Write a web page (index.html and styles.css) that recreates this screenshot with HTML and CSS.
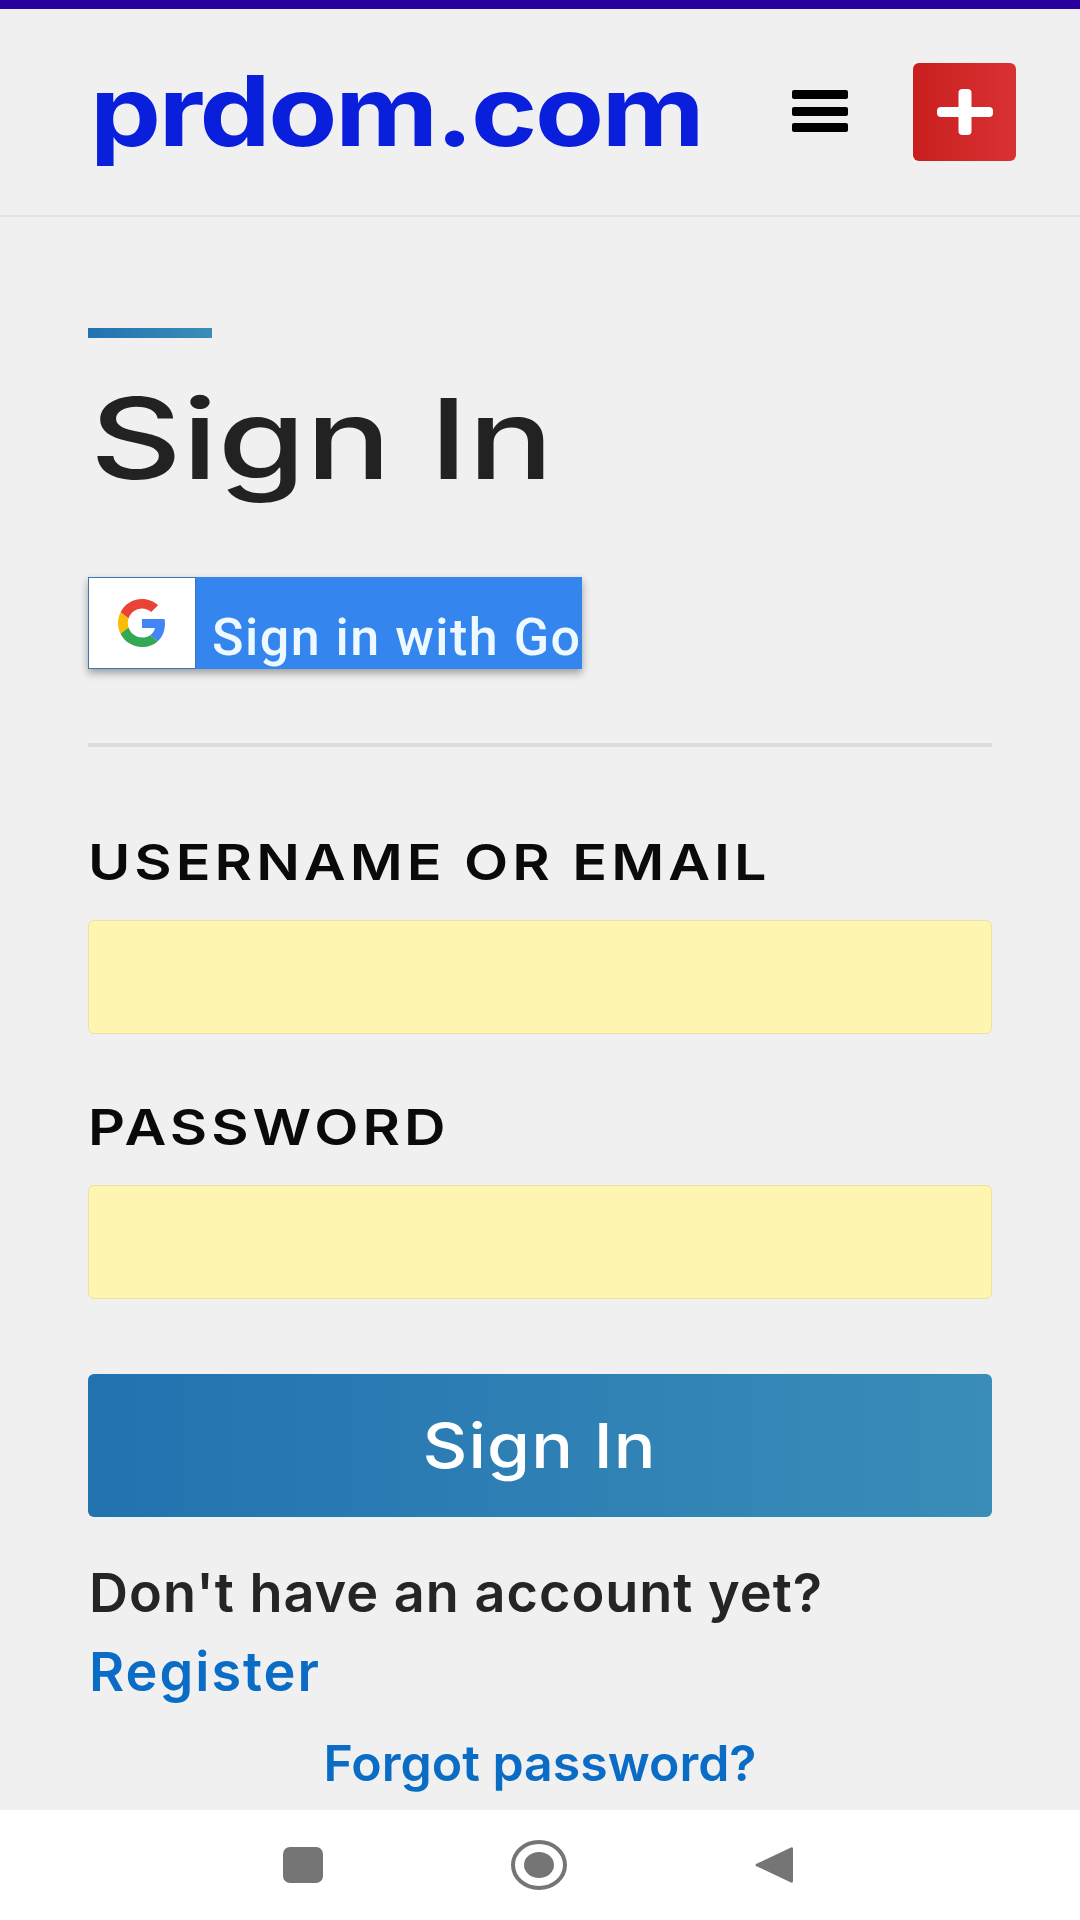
FILE: index.html
```html
<!DOCTYPE html>
<html lang="en">
<head>
    <meta charset="UTF-8">
    <meta name="viewport" content="width=device-width, initial-scale=1.0">
    <title>Sign In - prdom.com</title>
    <link rel="stylesheet" href="styles.css">
</head>
<body>

    <div class="status-bar"></div>

    <!-- Header -->
    <header class="site-header">
        <a class="logo" href="#">prdom.com</a>
        <button class="menu-btn" type="button" aria-label="Menu">
            <span></span><span></span><span></span>
        </button>
        <button class="add-btn" type="button" aria-label="Add">
            <svg width="56" height="46" viewBox="0 0 56 46">
                <rect x="21.500" y="0" width="13" height="46" rx="4" fill="#fff"/>
                <rect x="0" y="18" width="56" height="10" rx="4" fill="#fff"/>
            </svg>
        </button>
    </header>

    <!-- Sign in form -->
    <main class="content">
        <div class="accent"></div>
        <h1>Sign In</h1>

        <a class="google-btn" href="#">
            <span class="google-icon">
                <svg width="52" height="48" viewBox="0 0 48 48">
                    <path fill="#EA4335" d="M24 9.500c3.540 0 6.710 1.220 9.210 3.600l6.850-6.850C35.900 2.380 30.470 0 24 0 14.620 0 6.510 5.380 2.560 13.220l7.980 6.190C12.430 13.720 17.740 9.500 24 9.500z"/>
                    <path fill="#4285F4" d="M46.980 24.550c0-1.570-.15-3.090-.38-4.550H24v9.020h12.940c-.58 2.960-2.260 5.480-4.780 7.180l7.730 6c4.510-4.180 7.090-10.360 7.090-17.650z"/>
                    <path fill="#FBBC05" d="M10.530 28.590c-.48-1.450-.76-2.990-.76-4.590s.27-3.140.76-4.590l-7.980-6.190C.92 16.460 0 20.120 0 24c0 3.880.92 7.540 2.560 10.780l7.970-6.190z"/>
                    <path fill="#34A853" d="M24 48c6.480 0 11.930-2.130 15.890-5.810l-7.730-6c-2.150 1.450-4.920 2.300-8.160 2.300-6.260 0-11.570-4.220-13.470-9.910l-7.980 6.190C6.510 42.620 14.620 48 24 48z"/>
                </svg>
            </span>
            <span class="google-text">Sign in with Google</span>
        </a>

        <hr class="divider">

        <form class="login-form">
            <label for="username">Username or Email</label>
            <input type="text" id="username" name="username">

            <label for="password">Password</label>
            <input type="password" id="password" name="password">

            <button class="submit-btn" type="button"><span>Sign In</span></button>
        </form>

        <p class="register-note">Don't have an account yet?</p>
        <a class="register-link" href="#">Register</a>
        <a class="forgot-link" href="#">Forgot password?</a>
    </main>

    <!-- Navigation keys -->
    <nav class="nav-keys">
        <svg width="40" height="36" viewBox="0 0 40 36"><rect width="40" height="36" rx="7" fill="#757575"/></svg>
        <svg width="56" height="50" viewBox="0 0 56 50"><ellipse cx="28" cy="25" rx="26" ry="23" fill="none" stroke="#757575" stroke-width="4"/><ellipse cx="28" cy="25" rx="15" ry="13" fill="#757575"/></svg>
        <svg width="38" height="38" viewBox="0 0 38 38"><path d="M36 1.500Q38 .5 38 3v32q0 2.500-2 1.500L1 20q-1-1 0-2z" fill="#757575"/></svg>
    </nav>

</body>
</html>
```

FILE: styles.css
```css
/* General */
* {
    box-sizing: border-box;
}

html, body {
    margin: 0;
    padding: 0;
}

body {
    width: 1080px;
    height: 1920px;
    overflow: hidden;
    display: flex;
    flex-direction: column;
    background-color: #f0f0f0;
    font-family: 'Inter', 'Roboto', sans-serif;
}

a {
    text-decoration: none;
}

.status-bar {
    height: 9px;
    background-color: #2a009c;
}

/* Header */
.site-header {
    height: 208px;
    padding: 54px 64px 0 90px;
    display: flex;
    align-items: flex-start;
    border-bottom: 2px solid #e2e2e2;
}

.logo {
    font-size: 98px;
    line-height: 108px;
    font-weight: 700;
    letter-spacing: -2px;
    color: #0a1fdc;
    margin-top: -6px;
    transform: scaleX(1.15);
    transform-origin: left;
}

.menu-btn {
    margin: 27px 0 0 auto;
    width: 56px;
    height: 42px;
    padding: 0;
    border: none;
    background: none;
    display: flex;
    flex-direction: column;
    justify-content: space-between;
}

.menu-btn span {
    display: block;
    height: 9px;
    border-radius: 2px;
    background-color: #000;
}

.add-btn {
    margin-left: 65px;
    width: 103px;
    height: 98px;
    padding: 0;
    border: none;
    border-radius: 6px;
    background: linear-gradient(to right, #c81e1e, #d93232);
    display: flex;
    align-items: center;
    justify-content: center;
}

/* Content */
.content {
    flex: 1;
    padding: 111px 88px 0;
    display: flex;
    flex-direction: column;
}

.accent {
    width: 124px;
    height: 10px;
    background: linear-gradient(to right, #2272b0, #3a8db8);
}

h1 {
    align-self: flex-start;
    margin: 32px 0 0 2px;
    font-size: 112px;
    line-height: 136px;
    font-weight: 500;
    color: #222;
    transform: scaleX(1.27);
    transform-origin: left;
}

.google-btn {
    margin-top: 71px;
    width: 494px;
    height: 92px;
    display: flex;
    overflow: hidden;
    background-color: #3486ee;
    box-shadow: 0 4px 8px rgba(0, 0, 0, 0.35);
}

.google-icon {
    width: 108px;
    flex-shrink: 0;
    display: flex;
    align-items: center;
    justify-content: center;
    background-color: #fff;
    border: 1px solid #3a78b5;
}

.google-text {
    padding: 30px 0 0 16px;
    font-family: 'Roboto', sans-serif;
    font-size: 52px;
    line-height: 62px;
    font-weight: 500;
    letter-spacing: 1.500px;
    white-space: nowrap;
    color: #eef8ff;
}

.divider {
    width: 100%;
    height: 4px;
    margin: 74px 0 0;
    border: none;
    background-color: #dcdcdc;
}

/* Form */
.login-form {
    display: flex;
    flex-direction: column;
    margin-top: 86px;
}

label {
    align-self: flex-start;
    font-size: 50px;
    line-height: 58px;
    font-weight: 600;
    letter-spacing: 3.500px;
    text-transform: uppercase;
    color: #0a0a0a;
    transform: scaleX(1.15);
    transform-origin: left;
}

input {
    width: 100%;
    height: 114px;
    margin: 29px 0 64px;
    border: 1px solid #ece3a0;
    border-radius: 6px;
    background-color: #fef5b0;
    outline: none;
}

.submit-btn {
    height: 143px;
    margin-top: 11px;
    border: none;
    border-radius: 6px;
    background: linear-gradient(to right, #2272b0, #3a8db8);
    color: #fff;
    font-family: inherit;
    font-size: 62px;
    font-weight: 500;
    letter-spacing: 1px;
}

.submit-btn span {
    display: inline-block;
    transform: scaleX(1.12);
}

.register-note {
    margin: 45px 0 0 1px;
    font-size: 54px;
    line-height: 62px;
    font-weight: 600;
    letter-spacing: 1px;
    color: #252525;
}

.register-link {
    margin: 17px 0 0 1px;
    font-size: 54px;
    line-height: 62px;
    font-weight: 600;
    letter-spacing: 2px;
    color: #0a6cc4;
}

.forgot-link {
    margin-top: 30px;
    text-align: center;
    font-size: 50px;
    line-height: 60px;
    font-weight: 600;
    color: #0a6cc4;
}

/* Navigation keys */
.nav-keys {
    height: 110px;
    padding-left: 283px;
    display: flex;
    align-items: center;
    background-color: #fff;
    gap: 188px;
}
```
